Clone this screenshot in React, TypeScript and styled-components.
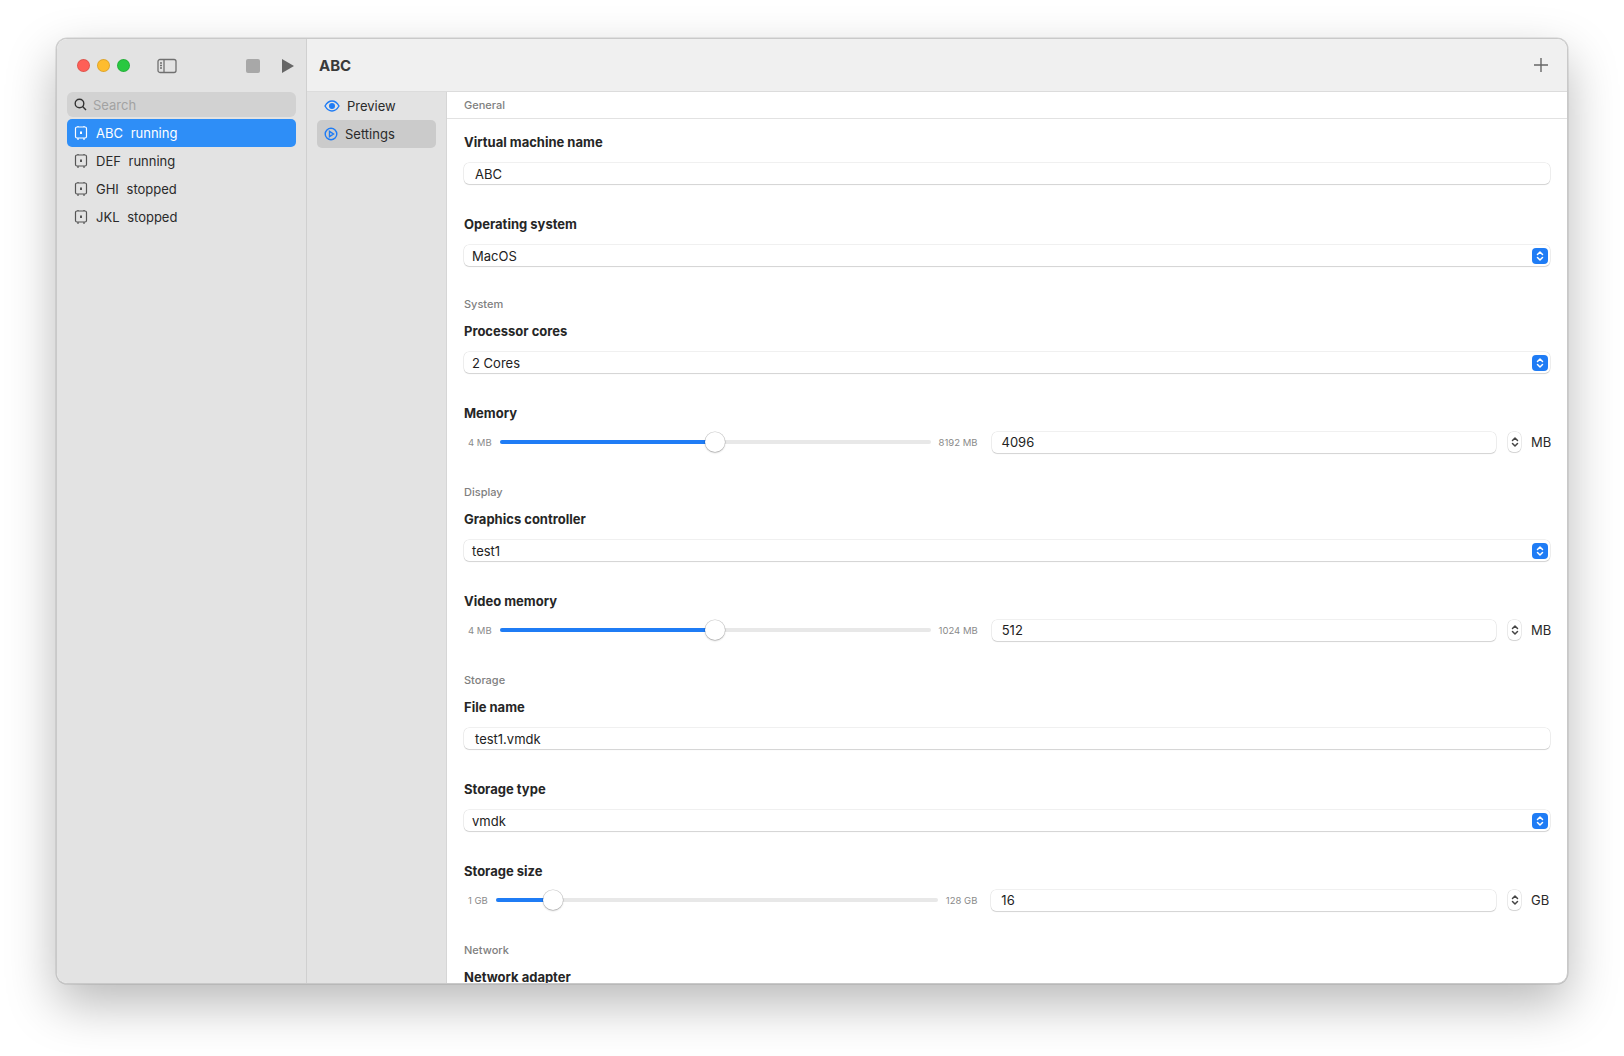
import React from "react";
import styled, { createGlobalStyle } from "styled-components";

const Global = createGlobalStyle`
  html, body { margin: 0; padding: 0; background: #fff; }
  body { font-family: Inter, "Noto Sans", sans-serif; -webkit-font-smoothing: antialiased; }
`;

const Page = styled.div`
  width: 1624px; height: 1056px; box-sizing: border-box;
  padding: 38px 56px 74px 56px;
`;
const Window = styled.div`
  height: 100%; display: flex; border-radius: 11px; overflow: hidden;
  border: 1px solid #c9c9c9;
  box-shadow: 0 20px 50px rgba(0,0,0,0.28), 0 0 0 0.5px rgba(0,0,0,0.15);
  background: #fff;
`;
const Sidebar = styled.div`
  width: 250px; background: #e3e3e3; border-right: 1px solid #d0d0d0;
  display: flex; flex-direction: column; padding: 0 10px; box-sizing: border-box;
`;
const SideBar = styled.div`
  height: 53px; display: flex; align-items: center; padding-left: 10px; gap: 7px;
`;
const Light = styled.span<{ c: string }>`
  width: 13px; height: 13px; border-radius: 50%; background: ${p => p.c};
  border: 0.5px solid rgba(0,0,0,0.12); box-sizing: border-box;
`;
const ToolIcon = styled.span<{ ml?: number }>`
  margin-left: ${p => p.ml ?? 0}px; display: flex; color: #6f6f6f;
`;
const Search = styled.div`
  height: 25px; background: #d2d2d2; border-radius: 6px; display: flex; align-items: center;
  gap: 6px; padding: 0 7px; color: #a2a2a2; font-size: 13px;
`;
const List = styled.div`display: flex; flex-direction: column; margin-top: 2px;`;
const Row = styled.div<{ active?: boolean }>`
  height: 28px; display: flex; align-items: center; padding: 0 7px; gap: 8px; border-radius: 5px;
  font-size: 13px; background: ${p => p.active ? "#2e8ef7" : "transparent"};
  color: ${p => p.active ? "#fff" : "#2a2a2a"};
  b { font-weight: 400; margin-right: 4px; }
`;
const Main = styled.div`flex: 1; display: flex; flex-direction: column; min-width: 0;`;
const TitleBar = styled.div`
  height: 52px; flex-shrink: 0; background: #f0f0f0; border-bottom: 1px solid #dcdcdc; display: flex; align-items: center;
  padding: 0 18px 0 12px; justify-content: space-between;
  h1 { font-size: 15px; font-weight: 700; color: #3a3a3a; margin: 0; }
`;
const Body = styled.div`flex: 1; display: flex; min-height: 0;`;
const Middle = styled.div`
  width: 140px; background: #e3e3e3; border-right: 1px solid #d6d6d6; padding: 0 10px; box-sizing: border-box;
  display: flex; flex-direction: column;
`;
const Tab = styled.div<{ active?: boolean }>`
  height: 28px; display: flex; align-items: center; gap: 7px; padding: 0 7px; border-radius: 5px;
  font-size: 13px; color: #2a2a2a; background: ${p => p.active ? "#cbcbcb" : "transparent"};
`;
const Content = styled.div`
  flex: 1; overflow: hidden; display: flex; flex-direction: column;
  & > * { flex-shrink: 0; }
`;
const Section = styled.div<{ top?: boolean }>`
  font-size: 11px; color: #808080; font-weight: 500; padding: 0 17px;
  ${p => p.top ? "height: 26px; display:flex; align-items:center; border-bottom: 1px solid #e2e2e2;" : "margin-top: 11px;"}
`;
const Field = styled.div`padding: 0 17px; display: flex; flex-direction: column;`;
const Label = styled.div<{ first?: boolean }>`
  font-size: 13px; font-weight: 700; color: #262626; margin-top: ${p => p.first ? 15 : 12}px; margin-bottom: 13px;
`;
const Input = styled.div`
  height: 21px; border-radius: 5px; background: #fff; font-size: 13px; color: #222;
  box-shadow: 0 0 0 0.5px rgba(0,0,0,0.12), 0 1px 1px rgba(0,0,0,0.12);
  display: flex; align-items: center; padding: 0 11px; margin-bottom: 20px; flex: 1;
`;
const Select = styled(Input)`padding: 0 2px 0 8px; justify-content: space-between;`;
const Stepper = styled.span`
  width: 16px; height: 16px; border-radius: 4px; background: #1f7cf5; display: flex; align-items: center; justify-content: center;
`;
const SliderRow = styled.div`display: flex; align-items: center; gap: 4px; height: 22px; margin: -3px 0 21px;`;
const Tiny = styled.span`font-size: 9.5px; color: #8a8a8a; white-space: nowrap; padding: 0 4px;`;
const Track = styled.div`flex: none; height: 4px; border-radius: 2px; background: #e8e8e8; position: relative;`;
const Fill = styled.div`position: absolute; left: 0; top: 0; bottom: 0; background: #1f7cf5; border-radius: 2px;`;
const Thumb = styled.div`
  position: absolute; top: 50%; width: 20px; height: 20px; margin: -10px 0 0 -10px; border-radius: 50%;
  background: #fff; box-shadow: 0 0 0 0.5px rgba(0,0,0,0.2), 0 1px 2px rgba(0,0,0,0.2);
`;
const NumInput = styled(Input)`margin: 0 0 0 6px; padding: 0 10px;`;
const Spin = styled.span`
  width: 13px; height: 20px; border-radius: 5px; margin-left: 8px; background: #fff;
  box-shadow: 0 0 0 0.5px rgba(0,0,0,0.15), 0 1px 1px rgba(0,0,0,0.1); display: flex; align-items: center; justify-content: center;
`;
const Unit = styled.span`font-size: 13px; color: #2a2a2a; margin-left: 6px; width: 19px;`;
const Line = styled.div`display: flex;`;

const Chip = ({ color }: { color: string }) => (
  <svg width="14" height="16" viewBox="0 0 14 16" fill="none" stroke={color} strokeWidth="1.2">
    <rect x="1.5" y="2" width="11" height="11" rx="1.5" />
    <path d="M4 1v1M10 1v1M4 13v2M10 13v2" />
    <rect x="6" y="6.5" width="2" height="2.5" fill={color} stroke="none" />
  </svg>
);

const Chevrons = ({ c = "#fff" }: { c?: string }) => (
  <svg width="8" height="12" viewBox="0 0 8 12" fill="none" stroke={c} strokeWidth="1.5" strokeLinecap="round" strokeLinejoin="round">
    <path d="M1.5 4.5L4 2l2.5 2.5M1.5 7.5L4 10l2.5-2.5" />
  </svg>
);

const Slider = ({ min, max, pct, trackW, val, unit }: { min: string; max: string; pct: number; trackW: number; val: string; unit: string }) => (
  <SliderRow>
    <Tiny>{min}</Tiny>
    <Track style={{ width: trackW }}>
      <Fill style={{ width: `${pct}%` }} />
      <Thumb style={{ left: `${pct}%` }} />
    </Track>
    <Tiny>{max}</Tiny>
    <NumInput>{val}</NumInput>
    <Spin><Chevrons c="#444" /></Spin>
    <Unit>{unit}</Unit>
  </SliderRow>
);

const Sel = ({ v }: { v: string }) => (
  <Line><Select>{v}<Stepper><Chevrons /></Stepper></Select></Line>
);
const Txt = ({ v }: { v: string }) => (<Line><Input>{v}</Input></Line>);

export default function App() {
  const vms = [["ABC", "running"], ["DEF", "running"], ["GHI", "stopped"], ["JKL", "stopped"]];
  return (
    <Page>
      <Global />
      <Window>
        <Sidebar>
          <SideBar>
            <Light c="#fe5f57" /><Light c="#febc2e" /><Light c="#28c840" />
            <ToolIcon ml={20}>
              <svg width="20" height="16" viewBox="0 0 20 16" fill="none" stroke="#707070" strokeWidth="1.3">
                <rect x="1" y="1.5" width="18" height="13" rx="2" /><path d="M7 1.5v13M3 5h2M3 7.5h2M3 10h2" />
              </svg>
            </ToolIcon>
            <ToolIcon ml={62}>
              <svg width="14" height="14"><rect x="0" y="0" width="14" height="14" rx="2" fill="#a8a8a8" /></svg>
            </ToolIcon>
            <ToolIcon ml={14}>
              <svg width="14" height="16"><path d="M1 1L13 8 1 15z" fill="#666" /></svg>
            </ToolIcon>
          </SideBar>
          <Search>
            <svg width="13" height="13" viewBox="0 0 13 13" fill="none" stroke="#333" strokeWidth="1.4"><circle cx="5.5" cy="5.5" r="4.3" /><path d="M8.6 8.6L12 12" /></svg>
            Search
          </Search>
          <List>
            {vms.map(([n, s], i) => (
              <Row key={n} active={i === 0}>
                <Chip color={i === 0 ? "#fff" : "#555"} />
                <span><b>{n}</b> {s}</span>
              </Row>
            ))}
          </List>
        </Sidebar>
        <Main>
          <TitleBar>
            <h1>ABC</h1>
            <svg width="16" height="16" viewBox="0 0 16 16" stroke="#666" strokeWidth="1.4"><path d="M8 1v14M1 8h14" /></svg>
          </TitleBar>
          <Body>
            <Middle>
              <Tab>
                <svg width="16" height="12" viewBox="0 0 16 12" fill="none" stroke="#1f7cf5" strokeWidth="1.4"><path d="M1 6C3 2.5 5.5 1 8 1s5 1.5 7 5c-2 3.5-4.5 5-7 5S3 9.5 1 6z" /><circle cx="8" cy="6" r="2.3" fill="#1f7cf5" /></svg>
                Preview
              </Tab>
              <Tab active>
                <svg width="14" height="14" viewBox="0 0 14 14" fill="none" stroke="#1f7cf5" strokeWidth="1.4"><circle cx="7" cy="7" r="5.8" /><path d="M5.5 4.3L9.5 7 5.5 9.7z" /></svg>
                Settings
              </Tab>
            </Middle>
            <Content>
              <Section top>General</Section>
              <Field>
                <Label first>Virtual machine name</Label>
                <Txt v="ABC" />
                <Label>Operating system</Label>
                <Sel v="MacOS" />
              </Field>
              <Section>System</Section>
              <Field>
                <Label>Processor cores</Label>
                <Sel v="2 Cores" />
                <Label>Memory</Label>
                <Slider min="4 MB" max="8192 MB" pct={50} trackW={431} val="4096" unit="MB" />
              </Field>
              <Section>Display</Section>
              <Field>
                <Label>Graphics controller</Label>
                <Sel v="test1" />
                <Label>Video memory</Label>
                <Slider min="4 MB" max="1024 MB" pct={50} trackW={431} val="512" unit="MB" />
              </Field>
              <Section>Storage</Section>
              <Field>
                <Label>File name</Label>
                <Txt v="test1.vmdk" />
                <Label>Storage type</Label>
                <Sel v="vmdk" />
                <Label>Storage size</Label>
                <Slider min="1 GB" max="128 GB" pct={13} trackW={442} val="16" unit="GB" />
              </Field>
              <Section>Network</Section>
              <Field>
                <Label>Network adapter</Label>
              </Field>
            </Content>
          </Body>
        </Main>
      </Window>
    </Page>
  );
}
